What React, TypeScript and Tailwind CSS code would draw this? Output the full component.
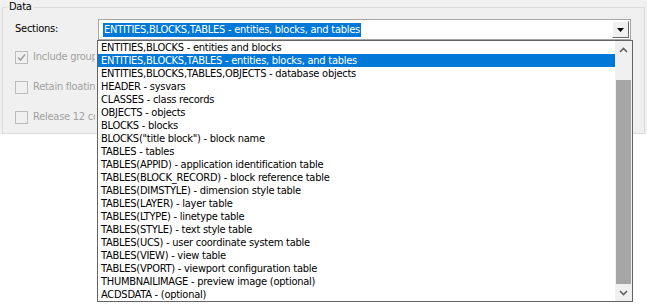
import React from "react";

const items = [
  "ENTITIES,BLOCKS - entities and blocks",
  "ENTITIES,BLOCKS,TABLES - entities, blocks, and tables",
  "ENTITIES,BLOCKS,TABLES,OBJECTS - database objects",
  "HEADER - sysvars",
  "CLASSES - class records",
  "OBJECTS - objects",
  "BLOCKS - blocks",
  'BLOCKS("title block") - block name',
  "TABLES - tables",
  "TABLES(APPID) - application identification table",
  "TABLES(BLOCK_RECORD) - block reference table",
  "TABLES(DIMSTYLE) - dimension style table",
  "TABLES(LAYER) - layer table",
  "TABLES(LTYPE) - linetype table",
  "TABLES(STYLE) - text style table",
  "TABLES(UCS) - user coordinate system table",
  "TABLES(VIEW) - view table",
  "TABLES(VPORT) - viewport configuration table",
  "THUMBNAILIMAGE - preview image (optional)",
  "ACDSDATA - (optional)",
];

const selected = 1;

function Check({ checked }: { checked?: boolean }) {
  return (
    <div className="w-[13px] h-[13px] border border-[#bcbcbc] bg-[#f0f0f0] flex items-center justify-center shrink-0">
      {checked && (
        <svg width="9" height="9" viewBox="0 0 9 9">
          <path d="M1 4.5 L3.5 7 L8 1.5" stroke="#a0a0a0" strokeWidth="1.6" fill="none" />
        </svg>
      )}
    </div>
  );
}

export default function App() {
  return (
    <div
      className="relative w-[647px] h-[304px] bg-white text-[11px] tracking-[-0.25px] text-black overflow-hidden font-stretch-condensed"
      style={{ fontFamily: '"DejaVu Sans Condensed", "DejaVu Sans", sans-serif' }}
    >
      {/* Dialog area */}
      <div className="h-[134px] bg-[#f0f0f0] px-[2px]">
        <fieldset className="h-[134px] border border-[#dcdcdc] w-[643px]">
          <legend className="ml-[4px] px-[2px] leading-[14px]">Data</legend>

          {/* Sections row */}
          <div className="flex items-center mt-[5px] h-[21px]">
            <span className="ml-[12px] w-[83px]">Sections:</span>
            <div className="w-[533px] h-[21px] border border-[#a6a6a6] bg-white flex items-center">
              <span className="ml-[4px] bg-[#0078d7] text-white leading-[14px] px-[1px]">
                ENTITIES,BLOCKS,TABLES - entities, blocks, and tables
              </span>
              <div className="ml-auto mr-[1px] w-[17px] h-[17px] bg-[#f0f0f0] border-t border-l border-t-white border-l-white border-r border-b border-r-[#696969] border-b-[#696969] flex items-center justify-center">
                <svg width="7" height="4" viewBox="0 0 7 4">
                  <path d="M0 0 H7 L3.5 4 Z" fill="#000" />
                </svg>
              </div>
            </div>
          </div>

          {/* Options (partly hidden behind the open list) */}
          <div className="flex flex-col gap-[17px] mt-[11px] ml-[12px] text-[#a0a0a0]">
            <div className="flex items-center gap-[5px] h-[13px]">
              <Check checked />
              <span className="w-[62px] overflow-hidden whitespace-nowrap">Include group</span>
            </div>
            <div className="flex items-center gap-[5px] h-[13px]">
              <Check />
              <span className="w-[62px] overflow-hidden whitespace-nowrap">Retain floatin</span>
            </div>
            <div className="flex items-center gap-[5px] h-[13px]">
              <Check />
              <span className="w-[62px] overflow-hidden whitespace-nowrap">Release 12 co</span>
            </div>
          </div>
        </fieldset>
      </div>

      {/* Dropdown list */}
      <div className="absolute left-[97px] top-[40px] w-[536px] h-[262px] border border-[#646464] bg-white flex">
        <div className="flex-1 flex flex-col">
          {items.map((t, i) => (
            <div
              key={t}
              className={`h-[13px] leading-[13px] pl-[3px] whitespace-nowrap ${
                i === selected ? "bg-[#0078d7] text-white" : ""
              }`}
            >
              {t}
            </div>
          ))}
        </div>
        <div className="w-[17px] bg-[#f0f0f0] flex flex-col">
          <div className="h-[17px] flex items-center justify-center">
            <svg width="9" height="6" viewBox="0 0 9 6">
              <path d="M1 5 L4.5 1.5 L8 5" stroke="#606060" strokeWidth="1.6" fill="none" />
            </svg>
          </div>
          <div className="h-[22px]" />
          <div className="mx-[1px] flex-1 bg-[#a6a6a6]" />
          <div className="h-[17px] flex items-center justify-center">
            <svg width="9" height="6" viewBox="0 0 9 6">
              <path d="M1 1 L4.5 4.5 L8 1" stroke="#606060" strokeWidth="1.6" fill="none" />
            </svg>
          </div>
        </div>
      </div>
    </div>
  );
}
